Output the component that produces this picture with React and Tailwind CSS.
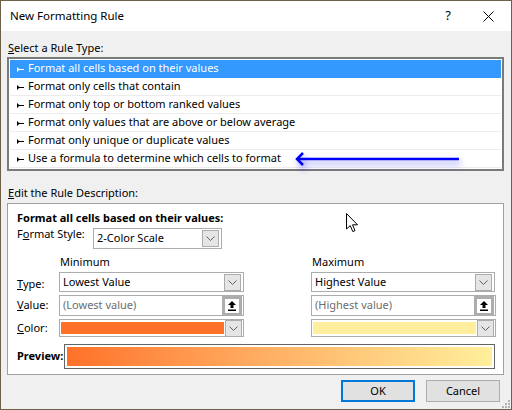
import React from "react";

const rules = [
  "Format all cells based on their values",
  "Format only cells that contain",
  "Format only top or bottom ranked values",
  "Format only values that are above or below average",
  "Format only unique or duplicate values",
  "Use a formula to determine which cells to format",
];

function Bullet({ white }) {
  const c = white ? "#ffffff" : "#000000";
  return (
    <svg width="7" height="5" viewBox="0 0 7 5" className="shrink-0 mt-[1px]">
      <polygon points="0,0.5 2.5,2 2.5,3 0,4.5" fill={c} />
      <rect x="0" y="0.5" width="1" height="4" fill={c} />
      <rect x="2" y="2" width="5" height="1" fill={c} />
    </svg>
  );
}

function Chevron() {
  return (
    <svg width="9" height="5" viewBox="0 0 9 5">
      <polyline points="0.5,0.5 4.5,4.5 8.5,0.5" fill="none" stroke="#606060" strokeWidth="1" />
    </svg>
  );
}

function DropButton() {
  return (
    <div className="w-[17px] h-[17px] bg-[#e5e5e5] border border-[#acacac] flex items-center justify-center">
      <Chevron />
    </div>
  );
}

function Combo({ value, width }) {
  return (
    <div className={`${width} h-full bg-white border border-[#acacac] flex items-center justify-between pl-[3px] pr-[2px]`}>
      <span>{value}</span>
      <DropButton />
    </div>
  );
}

function ValueBox({ placeholder }) {
  return (
    <div className="w-[185px] h-full bg-white border border-[#acacac] flex items-center justify-between pl-[3px] pr-[1px]">
      <span className="text-[#6d6d6d]">{placeholder}</span>
      <div className="w-[20px] h-[20px] bg-white border-[3px] border-[#adadad] flex items-center justify-center">
        <svg width="8" height="10" viewBox="0 0 8 10">
          <polygon points="4,0 8,4 5.5,4 5.5,7 2.5,7 2.5,4 0,4" fill="#000" />
          <rect x="0" y="8.5" width="8" height="1.5" fill="#000" />
        </svg>
      </div>
    </div>
  );
}

function ColorBox({ color }) {
  return (
    <div className="w-[185px] h-full bg-white border border-[#acacac] flex items-center pl-[1px] pr-[1px] gap-[1px]">
      <div className="flex-1 h-[12px]" style={{ background: color }} />
      <DropButton />
    </div>
  );
}

export default function App() {
  return (
    <div
      className="relative w-[512px] h-[410px] border border-[#6e6149] bg-[#f0f0f0] flex flex-col text-[11px] text-black overflow-hidden"
      style={{ fontFamily: '"Segoe UI", "Noto Sans", sans-serif' }}
    >
      {/* title bar */}
      <div className="h-[30px] shrink-0 bg-white flex items-center pl-[9px] text-[11.5px]">
        <span className="flex-1">New Formatting Rule</span>
        <span className="w-[20px] text-center text-[13px] mr-[25px]">?</span>
        <svg width="11" height="11" viewBox="0 0 11 11" className="mr-[17px]">
          <line x1="0.5" y1="0.5" x2="10.5" y2="10.5" stroke="#000" strokeWidth="1" />
          <line x1="10.5" y1="0.5" x2="0.5" y2="10.5" stroke="#000" strokeWidth="1" />
        </svg>
      </div>

      <div className="flex flex-col pl-[6px]">
        <div className="mt-[9px] h-[16px] leading-[16px] pl-[1px]">
          <u>S</u>elect a Rule Type:
        </div>

        {/* rule list */}
        <div className="mt-[1px] w-[497px] h-[114px] border-2 border-[#7a7a7a] bg-white p-[1px] flex flex-col">
          {rules.map((r, i) => (
            <div
              key={r}
              className={`h-[18px] flex items-center gap-[4px] pl-[7px] border-b ${
                i === 0 ? "bg-[#3399ff] text-white border-[#3399ff]" : "border-[#ececec]"
              }`}
            >
              <Bullet white={i === 0} />
              <span>{r}</span>
            </div>
          ))}
        </div>

        <div className="mt-[14px] h-[16px] leading-[16px] pl-[1px]">
          <u>E</u>dit the Rule Description:
        </div>

        {/* description panel */}
        <div className="mt-[2px] w-[497px] h-[172px] border border-[#a0a0a0] bg-white flex flex-col pl-[9px] pt-[6px]">
          <div className="h-[16px] leading-[16px] font-bold">Format all cells based on their values:</div>

          <div className="mt-[2px] h-[21px] flex items-start">
            <span className="w-[76px] leading-[16px] -mt-[2px]">
              F<u>o</u>rmat Style:
            </span>
            <Combo value="2-Color Scale" width="w-[129px]" />
          </div>

          <div className="mt-[5px] h-[16px] leading-[16px] flex">
            <span className="ml-[43px] w-[252px]">Minimum</span>
            <span>Maximum</span>
          </div>

          <div className="mt-[2px] h-[20px] flex items-center">
            <span className="w-[42px] mt-[4px]">
              <u>T</u>ype:
            </span>
            <Combo value="Lowest Value" width="w-[185px]" />
            <div className="w-[67px]" />
            <Combo value="Highest Value" width="w-[184px]" />
          </div>

          <div className="mt-[3px] h-[21px] flex items-center">
            <span className="w-[42px]">
              <u>V</u>alue:
            </span>
            <ValueBox placeholder="(Lowest value)" />
            <div className="w-[67px]" />
            <ValueBox placeholder="(Highest value)" />
          </div>

          <div className="mt-[3px] h-[18px] flex items-center">
            <span className="w-[42px]">
              <u>C</u>olor:
            </span>
            <ColorBox color="#ff7128" />
            <div className="w-[67px]" />
            <ColorBox color="#ffef9c" />
          </div>

          <div className="mt-[7px] h-[25px] flex items-center">
            <span className="w-[47px] shrink-0 whitespace-nowrap font-bold">Preview:</span>
            <div className="w-[431px] h-full border border-[#646464] p-[2px] bg-white">
              <div className="w-full h-full bg-gradient-to-r from-[#ff7128] to-[#ffef9c]" />
            </div>
          </div>
        </div>

        {/* buttons */}
        <div className="mt-[5px] flex justify-end gap-[11px] pr-[11px]">
          <div className="w-[74px] h-[22px] border-2 border-[#0078d7] bg-[#e1e1e1] flex items-center justify-center">
            OK
          </div>
          <div className="w-[74px] h-[22px] border border-[#adadad] bg-[#e1e1e1] flex items-center justify-center">
            Cancel
          </div>
        </div>
      </div>

      {/* annotation arrow */}
      <svg
        width="170"
        height="16"
        viewBox="0 0 170 16"
        className="absolute left-[292px] top-[150px] drop-shadow-[2px_4px_3px_rgba(0,0,255,0.45)]"
      >
        <line x1="5" y1="8" x2="166" y2="8" stroke="#0000ff" strokeWidth="2.5" />
        <polyline points="10,2 4,8 10,14" fill="none" stroke="#0000ff" strokeWidth="2.5" />
      </svg>

      {/* mouse cursor */}
      <svg width="13" height="20" viewBox="0 0 13 20" className="absolute left-[345px] top-[212px]">
        <path
          d="M0.5 0.5 L0.5 16 L4.2 12.6 L6.8 18.6 L9 17.6 L6.5 11.8 L11.5 11.8 Z"
          fill="#fff"
          stroke="#000"
          strokeWidth="1"
          strokeLinejoin="round"
        />
      </svg>

      {/* resize grip */}
      <svg width="9" height="9" viewBox="0 0 9 9" className="absolute right-[1px] bottom-[1px]">
        {[
          [7, 1],
          [4, 4],
          [7, 4],
          [1, 7],
          [4, 7],
          [7, 7],
        ].map(([x, y]) => (
          <rect key={`${x}-${y}`} x={x} y={y} width="2" height="2" fill="#b4b4b4" />
        ))}
      </svg>
    </div>
  );
}
